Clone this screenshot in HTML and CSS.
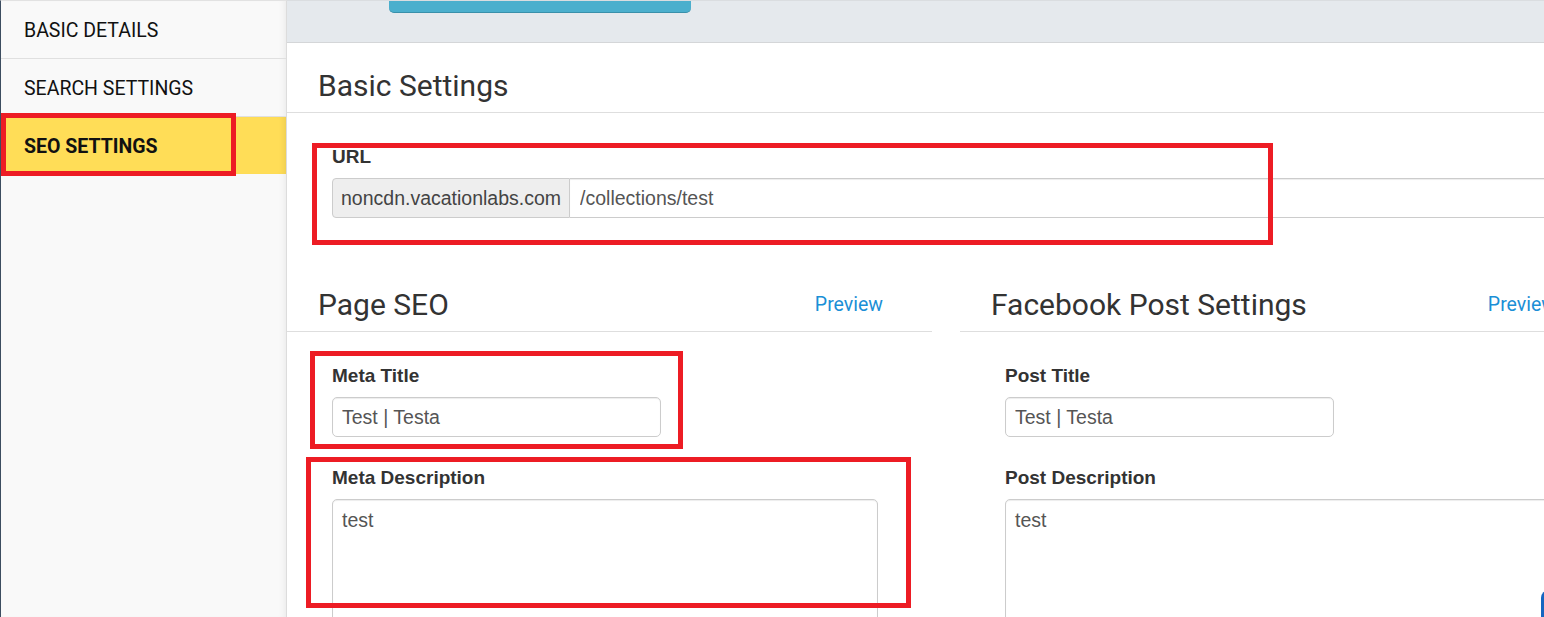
FILE: index.html
```html
<!DOCTYPE html>
<html lang="en">
<head>
    <meta charset="UTF-8">
    <meta name="viewport" content="width=device-width, initial-scale=1.0">
    <title>Collection - SEO Settings</title>
    <link rel="stylesheet" href="styles.css">
</head>
<body>
    <div class="page">
        <aside class="sidebar">
            <a class="side-item" href="#">BASIC DETAILS</a>
            <a class="side-item" href="#">SEARCH SETTINGS</a>
            <a class="side-item active" href="#">SEO SETTINGS</a>
        </aside>

        <main class="main">
            <div class="top-bar">
                <button class="save-btn" type="button"></button>
            </div>

            <section class="basic">
                <h2 class="section-title">Basic Settings</h2>
                <div class="basic-body">
                    <div class="form-group">
                        <label class="field-label">URL</label>
                        <div class="input-group">
                            <span class="addon">noncdn.vacationlabs.com</span>
                            <input class="input grouped" type="text" value="/collections/test">
                        </div>
                    </div>
                </div>
            </section>

            <div class="columns">
                <section class="col">
                    <div class="col-head">
                        <h2 class="section-title">Page SEO</h2>
                        <a class="preview" href="#">Preview</a>
                    </div>
                    <div class="col-body">
                        <div class="form-group">
                            <label class="field-label">Meta Title</label>
                            <input class="input short" type="text" value="Test | Testa">
                        </div>
                        <div class="form-group">
                            <label class="field-label">Meta Description</label>
                            <textarea class="textarea">test</textarea>
                        </div>
                    </div>
                </section>

                <section class="col">
                    <div class="col-head">
                        <h2 class="section-title">Facebook Post Settings</h2>
                        <a class="preview" href="#">Preview</a>
                    </div>
                    <div class="col-body">
                        <div class="form-group">
                            <label class="field-label">Post Title</label>
                            <input class="input short" type="text" value="Test | Testa">
                        </div>
                        <div class="form-group">
                            <label class="field-label">Post Description</label>
                            <textarea class="textarea">test</textarea>
                        </div>
                    </div>
                </section>
            </div>
        </main>
    </div>

    <!-- annotation boxes drawn over the screenshot -->
    <div class="mark mark-nav"></div>
    <div class="mark mark-url"></div>
    <div class="mark mark-title"></div>
    <div class="mark mark-desc"></div>

    <div class="chat-tab"></div>
</body>
</html>
```

FILE: styles.css
```css
body {
    margin: 0;
    font-family: Roboto, "Liberation Sans", Arial, sans-serif;
    background: #fff;
    height: 100vh;
    overflow: hidden;
    position: relative;
}

.page {
    display: flex;
    height: 100vh;
    overflow: hidden;
}

/* sidebar */
.sidebar {
    width: 285px;
    flex-shrink: 0;
    background: #f9f9f9;
    border-left: 1px solid #3c4d60;
    border-right: 1px solid #dcdcdc;
    border-top: 1px solid #e2e2e2;
    box-shadow: inset -6px 0 6px -4px rgba(0, 0, 0, 0.06);
    display: flex;
    flex-direction: column;
}

.side-item {
    height: 55px;
    display: flex;
    align-items: center;
    padding: 2px 0 0 23px;
    border-bottom: 1px solid #e0e0e0;
    color: #111;
    text-decoration: none;
    font-size: 19.5px;
}

.side-item.active {
    background: #ffdd57;
    font-weight: 700;
    border-bottom: none;
    box-shadow: inset -6px 0 6px -4px rgba(0, 0, 0, 0.08);
}

/* main area, wider than the window */
.main {
    width: 1318px;
    flex-shrink: 0;
}

.top-bar {
    height: 41px;
    background: #e5e9ed;
    border-top: 1px solid #dadde0;
    border-bottom: 1px solid #d4d6d8;
    overflow: hidden;
}

.save-btn {
    display: block;
    margin: -28px 0 0 102px;
    width: 302px;
    height: 40px;
    background: #4bafcd;
    border: none;
    border-bottom: 1px solid #3990aa;
    border-radius: 5px;
}

.section-title {
    margin: 0;
    font-family: Roboto, sans-serif;
    font-weight: 400;
    font-size: 30px;
    line-height: 36px;
    color: #333;
}

.basic > .section-title {
    padding: 25px 31px 8px;
    border-bottom: 1px solid #dedede;
}

.basic-body {
    padding: 33px 54px 45px 45px;
}

.form-group + .form-group {
    margin-top: 30px;
}

.field-label {
    display: block;
    font-family: "Liberation Sans", Arial, sans-serif;
    font-weight: 700;
    font-size: 19px;
    line-height: 22px;
    color: #333;
    margin-bottom: 10px;
}

.input-group {
    display: flex;
    height: 40px;
}

.addon {
    display: flex;
    align-items: center;
    padding: 0 8px;
    background: #eee;
    border: 1px solid #ccc;
    border-radius: 4px 0 0 4px;
    font-family: "Liberation Sans", Arial, sans-serif;
    font-size: 19.5px;
    color: #444;
    white-space: nowrap;
}

.input,
.textarea {
    box-sizing: border-box;
    font-family: "Liberation Sans", Arial, sans-serif;
    font-size: 19.5px;
    color: #555;
    border: 1px solid #ccc;
    border-radius: 5px;
    box-shadow: inset 0 1px 1px rgba(0, 0, 0, 0.075);
    background: #fff;
    outline: none;
}

.input {
    height: 40px;
    padding: 0 9px;
}

.input.grouped {
    flex: 1;
    border-left: none;
    border-radius: 0 4px 4px 0;
    padding-left: 10px;
}

.input.short {
    width: 329px;
    display: block;
}

.textarea {
    display: block;
    width: 100%;
    height: 160px;
    padding: 9px 9px;
    line-height: 22px;
    resize: none;
}

/* two columns */
.columns {
    display: grid;
    grid-template-columns: 645px 645px;
    column-gap: 28px;
}

.col-head {
    display: flex;
    justify-content: space-between;
    align-items: center;
    padding: 24px 49px 8px 31px;
    border-bottom: 1px solid #dedede;
}

.preview {
    font-family: Roboto, sans-serif;
    font-size: 19.5px;
    color: #1b8fd6;
    text-decoration: none;
    margin-top: -2px;
}

.col-body {
    padding: 33px 54px 0 45px;
}

/* red annotation frames */
.mark {
    position: absolute;
    border: 5px solid #ed1c24;
    box-sizing: border-box;
}

.mark-nav {
    left: 1px;
    top: 113px;
    width: 235px;
    height: 63px;
}

.mark-url {
    left: 312px;
    top: 143px;
    width: 961px;
    height: 102px;
}

.mark-title {
    left: 310px;
    top: 351px;
    width: 373px;
    height: 98px;
}

.mark-desc {
    left: 306px;
    top: 457px;
    width: 605px;
    height: 151px;
}

.chat-tab {
    position: absolute;
    left: 1541px;
    top: 590px;
    width: 20px;
    height: 40px;
    background: #1565c0;
    border-radius: 8px;
}
```
